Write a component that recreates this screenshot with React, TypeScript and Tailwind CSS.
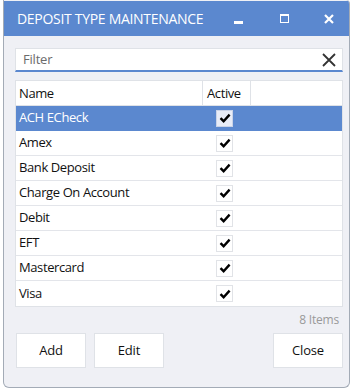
const rows = [
  'ACH ECheck',
  'Amex',
  'Bank Deposit',
  'Charge On Account',
  'Debit',
  'EFT',
  'Mastercard',
  'Visa',
];

function Check() {
  return (
    <svg width="12" height="10" viewBox="0 0 12 10">
      <path d="M1.5 5.2 L4.6 8.2 L10.6 1.6" fill="none" stroke="#000" strokeWidth="2.4" />
    </svg>
  );
}

export default function App() {
  const font = { fontFamily: '"Open Sans", "Noto Sans", sans-serif' };
  return (
    <div className="h-[390px] w-[352px] bg-white" style={font}>
      <div className="ml-[3px] flex h-[388px] w-[347px] flex-col overflow-hidden rounded-b-[6px] rounded-tr-[4px] border-l border-r border-b border-[#a3abb6] bg-[#eff0f5]">
        <div className="mt-[1px] flex h-[35px] shrink-0 items-center bg-[#5b88cf] text-white">
          <span className="ml-[13px] text-[14px] tracking-[-0.3px]">DEPOSIT TYPE MAINTENANCE</span>
          <div className="ml-auto flex items-center">
            <div className="mt-[8px] mr-[37px] h-[3px] w-[9px] bg-white" />
            <div className="mr-[35px] h-[9px] w-[9px] border-[1.5px] border-t-[2.5px] border-white" />
            <svg width="10" height="10" viewBox="0 0 10 10" className="mr-[15px]">
              <path d="M1 1 L9 9 M9 1 L1 9" stroke="#fff" strokeWidth="2.2" />
            </svg>
          </div>
        </div>

        <div className="ml-[11px] mt-[12px] flex h-[24px] w-[328px] items-center border border-b-2 border-[#dfe2e7] border-b-[#5b88cf] bg-white">
          <span className="ml-[7px] text-[13px] tracking-[-0.2px] text-[#6b6b6b]">Filter</span>
          <svg width="16" height="16" viewBox="0 0 16 16" className="ml-auto mr-[5px]">
            <path d="M2 2 L14 14 M14 2 L2 14" stroke="#333" strokeWidth="1.8" />
          </svg>
        </div>

        <div className="ml-[11px] mt-[8px] w-[328px] border border-[#dfe2e7] bg-white text-[13px] tracking-[-0.4px] text-[#111]">
          <div className="flex h-[25px] border-b border-[#dfe2e7]">
            <div className="flex w-[187px] items-center border-r border-[#dfe2e7] pl-[3px] pt-[2px]">Name</div>
            <div className="flex w-[48px] items-center border-r border-[#dfe2e7] pl-[4px] pt-[2px]">Active</div>
          </div>
          {rows.map((r, i) => (
            <div
              key={r}
              className={
                i === 0
                  ? 'flex h-[25px] items-center border-b border-[#5b88cf] bg-[#5b88cf] text-white'
                  : 'flex h-[25px] items-center border-b border-[#e3e5ea] last:border-b-0'
              }
            >
              <div className="w-[200px] pl-[3px]">{r}</div>
              <div
                className={
                  i === 0
                    ? 'flex h-[17px] w-[17px] items-center justify-center border border-[#c9d3e8] bg-[#e8ecf7]'
                    : 'flex h-[17px] w-[17px] items-center justify-center border border-[#e1e3e7] bg-white'
                }
              >
                <Check />
              </div>
            </div>
          ))}
        </div>

        <div className="mr-[10px] mt-[4px] text-right text-[12px] tracking-[-0.2px] text-[#9a9a9a]">8 Items</div>

        <div className="ml-[12px] mt-[4px] flex w-[327px] text-[13px] tracking-[-0.2px] text-[#111]">
          <button className="h-[35px] w-[70px] border border-[#dfe2e7] bg-white">Add</button>
          <button className="ml-[8px] h-[35px] w-[70px] border border-[#dfe2e7] bg-white">Edit</button>
          <button className="ml-auto h-[35px] w-[70px] border border-[#dfe2e7] bg-white">Close</button>
        </div>
      </div>
    </div>
  );
}
